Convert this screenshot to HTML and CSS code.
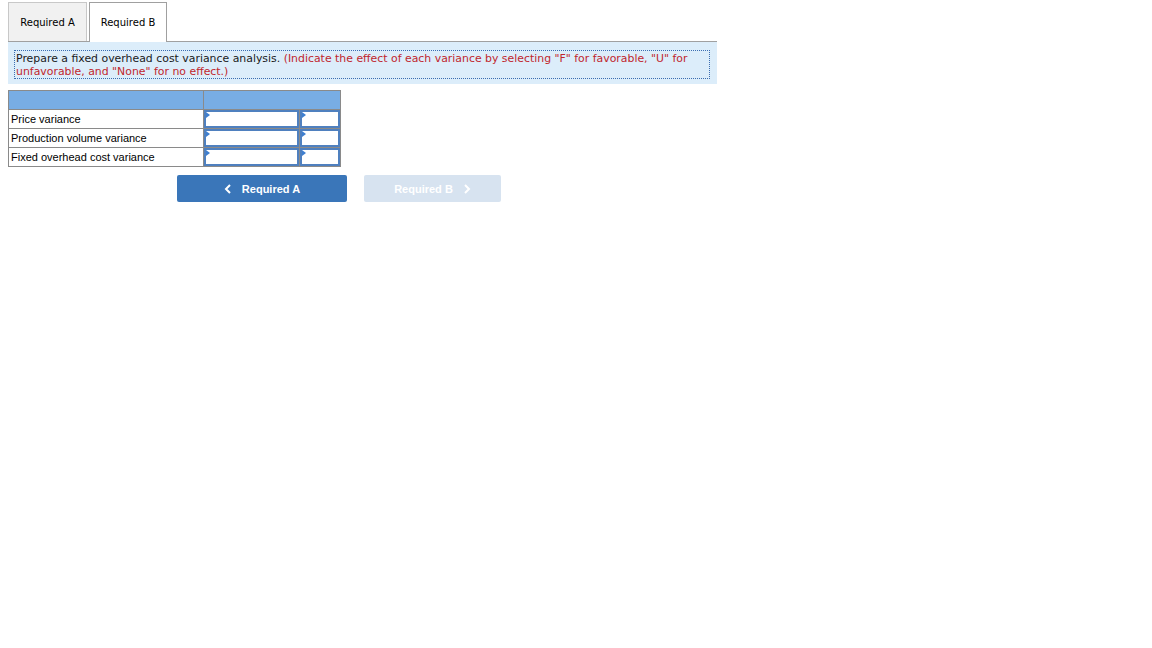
FILE: index.html
```html
<!DOCTYPE html>
<html lang="en">
<head>
    <meta charset="UTF-8">
    <title>Required B</title>
    <link rel="stylesheet" href="styles.css">
</head>
<body>
    <div class="page">
        <div class="tabs">
            <div class="tab">Required A</div>
            <div class="tab active">Required B</div>
        </div>

        <div class="instructions">
            <div class="instructions-box">
                Prepare a fixed overhead cost variance analysis. <span class="hint">(Indicate the effect of each variance by selecting "F" for favorable, "U" for unfavorable, and "None" for no effect.)</span>
            </div>
        </div>

        <table class="variance-table">
            <tr class="head">
                <th class="label-col"></th>
                <th colspan="2"></th>
            </tr>
            <tr>
                <td class="label">Price variance</td>
                <td class="entry amount"><span class="marker"></span></td>
                <td class="entry effect"><span class="marker"></span></td>
            </tr>
            <tr>
                <td class="label">Production volume variance</td>
                <td class="entry amount"><span class="marker"></span></td>
                <td class="entry effect"><span class="marker"></span></td>
            </tr>
            <tr>
                <td class="label">Fixed overhead cost variance</td>
                <td class="entry amount"><span class="marker"></span></td>
                <td class="entry effect"><span class="marker"></span></td>
            </tr>
        </table>

        <div class="nav">
            <button class="nav-btn prev">
                <svg width="8" height="10" viewBox="0 0 8 10"><path d="M6 1 L2 5 L6 9" fill="none" stroke="white" stroke-width="2"/></svg>
                Required A
            </button>
            <button class="nav-btn next" disabled>
                Required B
                <svg width="8" height="10" viewBox="0 0 8 10"><path d="M2 1 L6 5 L2 9" fill="none" stroke="white" stroke-width="2"/></svg>
            </button>
        </div>
    </div>
</body>
</html>
```

FILE: styles.css
```css
body {
    margin: 0;
    background: #fff;
    font-family: "DejaVu Sans", Verdana, sans-serif;
    color: #000;
}
.page {
    padding: 2px 8px;
    width: 709px;
}
.tabs {
    display: flex;
    gap: 2px;
    height: 39px;
}
.tab {
    box-sizing: border-box;
    height: 39px;
    width: 79px;
    display: flex;
    align-items: center;
    justify-content: center;
    font-size: 10px;
    background: #f1f1f1;
    border: 1px solid #c8c8c8;
    border-bottom: none;
}
.tab.active {
    width: 78px;
    background: #fff;
    border: 1px solid #a0a0a0;
    border-bottom: none;
    height: 40px;
    position: relative;
    z-index: 1;
}
.instructions {
    border-top: 1px solid #a0a0a0;
    background: #dcedfa;
    padding: 8px 7px 5px 6px;
}
.instructions-box {
    border: 1px dotted #3b6db0;
    padding: 1px 1px 0 1px;
    font-size: 10.9px;
    line-height: 13px;
    color: #1a1a1a;
}
.hint {
    color: #c0262d;
}
.variance-table {
    margin-top: 6px;
    border-collapse: collapse;
    font-family: "Liberation Sans", Arial, sans-serif;
    font-size: 11px;
}
.variance-table th,
.variance-table td {
    border: 1px solid #8a8a8a;
    padding: 0;
}
.head th {
    background: #78ade4;
    height: 18px;
}
.label-col {
    width: 194px;
}
.label {
    height: 18px;
    padding-left: 2px !important;
}
.entry {
    position: relative;
    box-shadow: inset 0 0 0 2px #4f80bf;
}
.entry.amount {
    width: 95px;
}
.entry.effect {
    width: 40px;
}
.marker {
    position: absolute;
    top: 2px;
    left: 2px;
    width: 0;
    height: 0;
    border-top: 3px solid transparent;
    border-bottom: 3px solid transparent;
    border-left: 4px solid #3e7fd0;
}
.nav {
    display: flex;
    gap: 17px;
    margin-top: 8px;
    padding-left: 169px;
}
.nav-btn {
    height: 27px;
    border: none;
    border-radius: 2px;
    font-family: "Liberation Sans", Arial, sans-serif;
    font-weight: bold;
    font-size: 11px;
    color: #fff;
    display: flex;
    align-items: center;
    justify-content: center;
    gap: 10px;
    padding: 0;
}
.nav-btn.prev {
    width: 170px;
    background: #3a76b9;
}
.nav-btn.next {
    width: 137px;
    background: #d7e3f0;
}
```
